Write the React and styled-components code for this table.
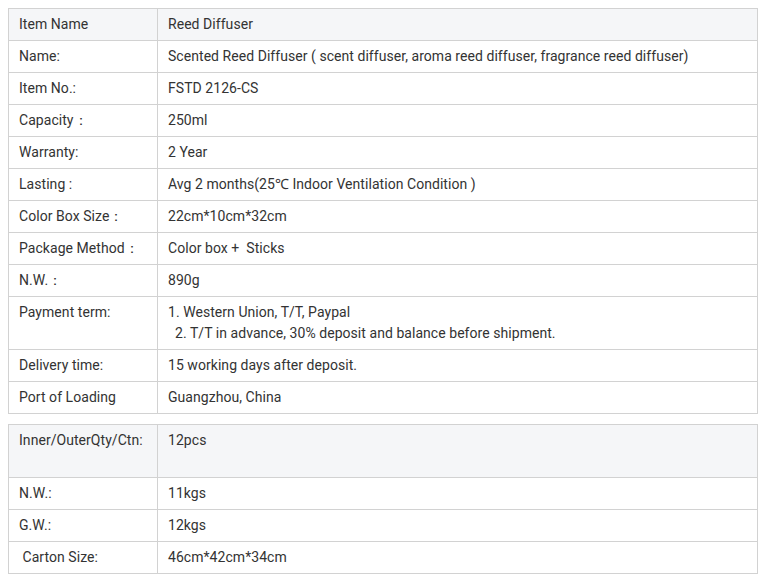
import React from "react";
import styled, { createGlobalStyle } from "styled-components";

const Global = createGlobalStyle`
  body {
    margin: 8px;
    background: #ffffff;
    font-family: Roboto, "Noto Sans", Arial, sans-serif;
  }
`;

const Table = styled.table`
  width: 750px;
  border-spacing: 0;
  border-top: 1px solid #d2d2d2;
  border-left: 1px solid #d2d2d2;
  margin-bottom: 10px;
  font-size: 14px;
  letter-spacing: 0.05px;
  color: #333333;
`;

const Row = styled.tr`
  background: ${(p) => (p.$head ? "#f5f6f8" : "#ffffff")};
`;

const Cell = styled.td`
  padding: 5px 10px;
  line-height: 21px;
  vertical-align: top;
  border-right: 1px solid #d2d2d2;
  border-bottom: 1px solid #d2d2d2;
  white-space: pre;
  ${(p) => (p.$label ? "width: 128px;" : "")}
`;

const Line = styled.div`
  min-height: 21px;
`;

const main = [
  ["Item Name", "Reed Diffuser"],
  ["Name:", "Scented Reed Diffuser ( scent diffuser, aroma reed diffuser, fragrance reed diffuser)"],
  ["Item No.:", "FSTD 2126-CS"],
  ["Capacity：", "250ml"],
  ["Warranty:", "2 Year"],
  ["Lasting :", "Avg 2 months(25℃ Indoor Ventilation Condition )"],
  ["Color Box Size：", "22cm*10cm*32cm"],
  ["Package Method：", "Color box +  Sticks"],
  ["N.W.：", "890g"],
  ["Payment term:", ["1. Western Union, T/T, Paypal", "  2. T/T in advance, 30% deposit and balance before shipment."]],
  ["Delivery time:", "15 working days after deposit."],
  ["Port of Loading", "Guangzhou, China"],
];

const carton = [
  ["Inner/OuterQty/Ctn:", ["12pcs", ""]],
  ["N.W.:", "11kgs"],
  ["G.W.:", "12kgs"],
  [" Carton Size:", "46cm*42cm*34cm"],
];

function Value({ v }) {
  if (Array.isArray(v)) return v.map((l, i) => <Line key={i}>{l}</Line>);
  return v;
}

function SpecTable({ rows }) {
  return (
    <Table>
      <tbody>
        {rows.map(([k, v], i) => (
          <Row key={i} $head={i === 0}>
            <Cell $label>{k}</Cell>
            <Cell>
              <Value v={v} />
            </Cell>
          </Row>
        ))}
      </tbody>
    </Table>
  );
}

export default function App() {
  return (
    <>
      <Global />
      <SpecTable rows={main} />
      <SpecTable rows={carton} />
    </>
  );
}
